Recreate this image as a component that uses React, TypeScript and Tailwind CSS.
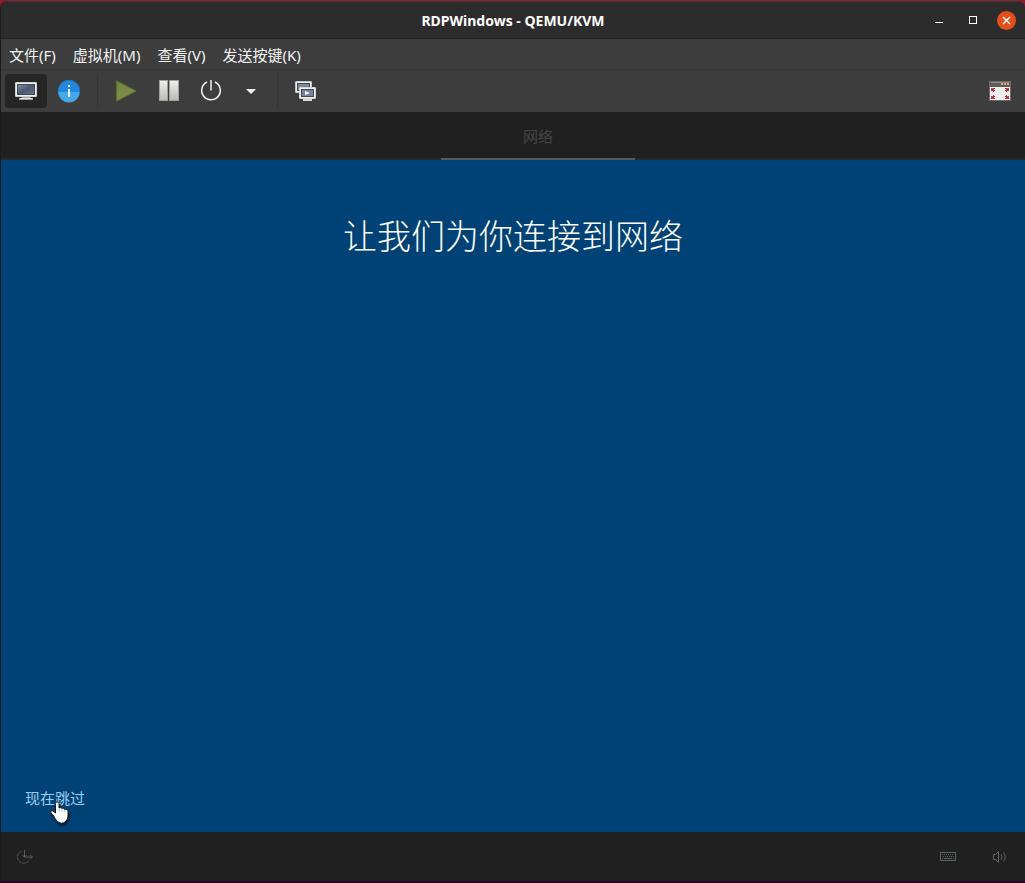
import type { ReactNode } from "react";

function ToolButton({ label, active = false, width = "w-[42px]", children }: { label: string; active?: boolean; width?: string; children: ReactNode }) {
  return (
    <button
      type="button"
      aria-label={label}
      aria-pressed={active}
      className={`flex h-[34px] items-center justify-center rounded ${width} ${active ? "bg-[#252525]" : ""}`}
    >
      {children}
    </button>
  );
}

function Separator() {
  return <div className="mx-[6px] h-[34px] w-px bg-[#353535]" />;
}

function MonitorIcon() {
  return (
    <svg width="22" height="20" viewBox="0 0 22 20">
      <defs>
        <linearGradient id="screen" x1="0" y1="0" x2="1" y2="1">
          <stop offset="0" stopColor="#8591a5" />
          <stop offset="0.5" stopColor="#4b586e" />
          <stop offset="1" stopColor="#65738a" />
        </linearGradient>
      </defs>
      <path d="M7 16h8l1 1h2v2H4v-2h2z" fill="#a3a3a0" />
      <rect x="5" y="17" width="12" height="1" fill="#e4e4e0" />
      <rect x="0.500" y="1.500" width="21" height="14" rx="0.5" fill="#f0f0ed" stroke="#cfcfcb" />
      <rect x="2.500" y="3.500" width="17" height="10" fill="url(#screen)" stroke="#3c475a" />
    </svg>
  );
}

function InfoIcon() {
  return (
    <svg width="24" height="24" viewBox="0 0 24 24">
      <circle cx="12" cy="12" r="10.800" fill="#2488df" stroke="#1c78c8" strokeWidth="0.8" />
      <path d="M1.400 13h21.200a10.600 10.600 0 0 1-21.200 0z" fill="#48a7e8" />
      <rect x="11" y="6" width="2" height="2" fill="#fff" />
      <rect x="11" y="10" width="2" height="8" fill="#e8f3fb" />
    </svg>
  );
}

function PlayIcon() {
  return (
    <svg width="22" height="22" viewBox="0 0 22 22">
      <defs>
        <linearGradient id="play" x1="0" y1="0" x2="0" y2="1">
          <stop offset="0" stopColor="#6f8540" />
          <stop offset="1" stopColor="#848e4b" />
        </linearGradient>
      </defs>
      <path d="M1.500 0.800v20.400L21.200 11z" fill="url(#play)" stroke="#596f2b" />
    </svg>
  );
}

function PauseIcon() {
  return (
    <svg width="22" height="22" viewBox="0 0 22 22">
      <defs>
        <linearGradient id="pause" x1="0" y1="0" x2="0" y2="1">
          <stop offset="0" stopColor="#f0f0ee" />
          <stop offset="1" stopColor="#b8bab4" />
        </linearGradient>
      </defs>
      <rect x="1.500" y="0.500" width="8" height="20" fill="url(#pause)" stroke="#a2a39f" />
      <rect x="11.500" y="0.500" width="9" height="20" fill="url(#pause)" stroke="#a2a39f" />
    </svg>
  );
}

function PowerIcon() {
  return (
    <svg width="22" height="22" viewBox="0 0 22 22" fill="none" stroke="#f2f2f2" strokeWidth="1.500">
      <path d="M7 2a9.300 9.300 0 1 0 8 0" />
      <path d="M11 0v10.500" />
    </svg>
  );
}

function ScreensIcon() {
  return (
    <svg width="22" height="22" viewBox="0 0 22 22">
      <path d="M4 12h8v3H4z" fill="#d8d8d4" />
      <rect x="0.500" y="1.500" width="16" height="11" rx="0.5" fill="#eeeeeb" stroke="#c5c5c1" />
      <rect x="2.500" y="3.500" width="12" height="7" fill="#7b899d" stroke="#3c475a" />
      <rect x="8" y="19" width="9" height="2" fill="#d8d8d4" />
      <rect x="4.500" y="7.500" width="16" height="11" rx="0.5" fill="#f4f4f1" stroke="#d5d5d1" />
      <rect x="6.500" y="9.500" width="12" height="7" fill="#7483a0" stroke="#3c475a" />
      <path d="M10 11v4l5-2z" fill="#fff" />
    </svg>
  );
}

function FullscreenIcon() {
  return (
    <svg width="22" height="20" viewBox="0 0 22 20">
      <rect x="0.500" y="0.500" width="21" height="19" fill="#ededeb" stroke="#6c6c6a" />
      <path d="M1 1h20v5H1z" fill="#5e5e5c" />
      <path d="M2 1h18v1H2z" fill="#898987" />
      <path d="M12 2h2v2h-2zM15 2h2v2h-2zM18 2h2v2h-2z" fill="#e3ad4e" />
      <path d="M2 7h4v1H5v1h1v1H5v1H4v-1H2zM20 7h-4v1h1v1h-1v1h1v1h1v-1h2zM2 18h4v-1H5v-1h1v-1H5v-1H4v1H2zM20 18h-4v-1h1v-1h-1v-1h1v-1h1v1h2z" fill="#bd3b42" />
    </svg>
  );
}

function EaseIcon() {
  return (
    <svg width="18" height="16" viewBox="0 0 18 16" fill="none" stroke="#5b5b5b">
      <path d="M5.500 2.200A6.200 6.200 0 1 0 13.300 10.500" strokeDasharray="3 1" />
      <path d="M8.500 1v7h8M6.500 6l2 2.200 2-2.200M14 6l2.500 2L14 10" />
    </svg>
  );
}

function KeyboardIcon() {
  return (
    <svg width="16" height="10" viewBox="0 0 16 10" fill="none" stroke="#5b6063">
      <rect x="0.500" y="0.500" width="15" height="8" />
      <path d="M2 2.500h12M3 4.500h11" strokeDasharray="1 1" />
      <path d="M2 6.500h1M4 6.500h8M13 6.500h1" />
    </svg>
  );
}

function SpeakerIcon() {
  return (
    <svg width="16" height="14" viewBox="0 0 16 14" fill="none" stroke="#636363">
      <path d="M1.500 4.500h2L6.500 1.500v11L3.500 9.500h-2z" />
      <path d="M9 4.500q2 2.500 0 5M11.500 2.500q3.500 4.500 0 9" />
    </svg>
  );
}

function HandCursor() {
  return (
    <svg className="pointer-events-none absolute top-[14px] left-[25px] drop-shadow-[1px_2px_1px_rgba(0,0,0,0.6)]" width="20" height="25" viewBox="0 0 20 25">
      <path
        d="M5.500 2.500C5.500 0.500 9 0.500 9 2.500V7c1-.8 2.600-.3 2.900.5 1.200-.6 2.500 0 2.700 1 1.500-.6 3.400.2 3.400 2V15c0 3-1.500 4.500-3 6-1.500 1.600-5.500 1.600-7 0C6 19 4.500 17 3.500 14.500L1 12c-.8-1.600.6-2.800 2-2l2.500 2z"
        fill="#fff"
        stroke="#16171c"
      />
      <path d="M9 7v4M12 8v3M15 9v2" stroke="#9a9aa0" strokeWidth="0.6" />
    </svg>
  );
}

const menus = ["文件(F)", "虚拟机(M)", "查看(V)", "发送按键(K)"];

export default function App() {
  return (
    <div className="flex min-h-screen flex-col border-b-2 border-[#2a0525] bg-[#8c1d2f] pt-px font-['Noto_Sans','Noto_Sans_CJK_SC',sans-serif]">
      <div className="flex flex-1 flex-col overflow-hidden rounded-t-lg border-l border-[#1f1b1c] bg-[#202020]">
        <header className="grid h-[38px] grid-cols-[1fr_auto_1fr] items-center border-t border-b border-t-[#3b3b3b] border-b-[#202020] bg-[#2c2c2c]">
          <h1 className="col-start-2 pt-px text-sm font-bold text-white">RDPWindows - QEMU/KVM</h1>
          <div className="flex items-center justify-end gap-2 pr-[9px]">
            <button type="button" aria-label="最小化" className="flex h-5 w-[26px] items-center justify-center">
              <svg width="8" height="8" viewBox="0 0 8 8"><path d="M0 6.500h8" stroke="#fff" /></svg>
            </button>
            <button type="button" aria-label="最大化" className="flex h-5 w-[26px] items-center justify-center">
              <svg width="8" height="8" viewBox="0 0 8 8"><rect x="0.500" y="0.500" width="7" height="7" fill="none" stroke="#fff" /></svg>
            </button>
            <button type="button" aria-label="关闭" className="ml-[3px] flex size-[19px] items-center justify-center rounded-full bg-[#e2501c]">
              <svg width="9" height="9" viewBox="0 0 9 9"><path d="M1 1l7 7M8 1L1 8" stroke="#fff" strokeWidth="1.400" /></svg>
            </button>
          </div>
        </header>
        <nav className="flex h-[31px] items-center gap-px border-b border-[#373737] bg-[#3d3d3d] text-[15px] leading-5 text-[#f2f2f2]">
          {menus.map((menu) => (
            <button key={menu} type="button" className="px-2 pt-0.5">{menu}</button>
          ))}
        </nav>
        <div className="flex h-[42px] items-center gap-px bg-[#3d3d3d] px-1">
          <ToolButton label="控制台" active><MonitorIcon /></ToolButton>
          <ToolButton label="详情"><InfoIcon /></ToolButton>
          <Separator />
          <ToolButton label="运行"><PlayIcon /></ToolButton>
          <ToolButton label="暂停"><PauseIcon /></ToolButton>
          <ToolButton label="关机" width="w-10"><PowerIcon /></ToolButton>
          <ToolButton label="关机选项" width="w-[38px]">
            <svg width="10" height="5" viewBox="0 0 10 5"><path d="M0 0h10L5 5z" fill="#f2f2f2" /></svg>
          </ToolButton>
          <Separator />
          <ToolButton label="快照"><ScreensIcon /></ToolButton>
          <div className="flex-1" />
          <ToolButton label="全屏"><FullscreenIcon /></ToolButton>
        </div>
        <div className="flex h-12 justify-center border-b-2 border-[#292929] bg-[#202020] pl-[50px]">
          <div className="-mb-[2px] flex w-[194px] items-center justify-center border-b-2 border-[#5a5a5a] pt-0.5 text-[15px] text-[#454545]">网络</div>
        </div>
        <main className="flex flex-1 flex-col items-center justify-between bg-[#004275]">
          <h2 className="pt-[50px] text-[34px] leading-[52px] font-light text-white">让我们为你连接到网络</h2>
          <div className="relative mb-[23px] ml-6 self-start">
            <a href="#skip" className="block text-[15px] leading-[22px] text-[#9bd0f5]">现在跳过</a>
            <HandCursor />
          </div>
        </main>
        <footer className="flex h-[49px] items-center justify-between bg-[#202020] pr-[17px] pl-[15px]">
          <button type="button" aria-label="轻松使用"><EaseIcon /></button>
          <div className="flex items-center gap-9">
            <button type="button" aria-label="键盘"><KeyboardIcon /></button>
            <button type="button" aria-label="音量"><SpeakerIcon /></button>
          </div>
        </footer>
      </div>
    </div>
  );
}
